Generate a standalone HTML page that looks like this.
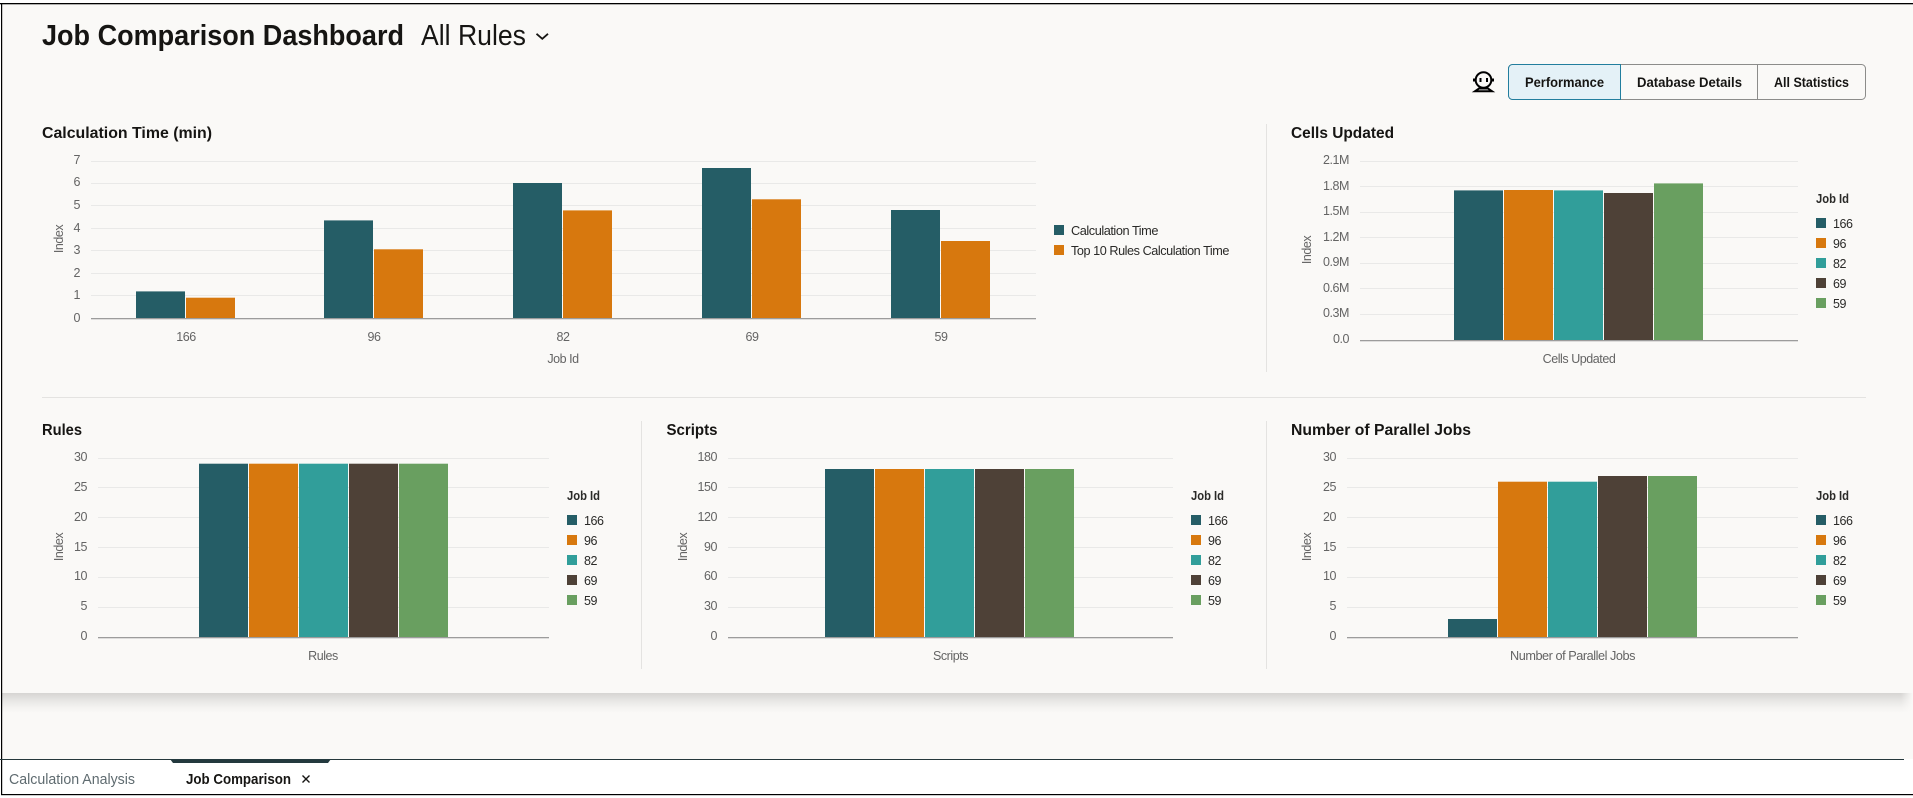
<!DOCTYPE html>
<html lang="en">
<head>
<meta charset="utf-8">
<title>Job Comparison Dashboard</title>
<style>
html,body{margin:0;padding:0;background:#fff;width:1913px;height:798px;overflow:hidden}
svg{display:block;position:absolute;left:0;top:0}
text{font-family:"Liberation Sans",Arial,sans-serif}
.h1{font-size:29px;font-weight:700;fill:#161513}
.sub{font-size:29px;fill:#161513}
.h2{font-size:16px;font-weight:700;fill:#161513}
.ax{font-size:12.5px;fill:#646464;letter-spacing:-.45px}
.lg{font-size:12.5px;fill:#2a2a28;letter-spacing:-.45px}
.lt{font-size:12.5px;font-weight:700;fill:#2a2a28}
.btn{font-size:14px;font-weight:700;fill:#161513}
.grid rect{fill:#e9e9e8}
.a{fill:#255d66}.b{fill:#d7780e}.c{fill:#319e9a}.d{fill:#4e4137}.e{fill:#699f60}
.base{fill:#9c9c9c}
.div{fill:#e4e3e1}
</style>
</head>
<body>
<svg width="1913" height="798" viewBox="0 0 1913 798" xmlns="http://www.w3.org/2000/svg">
<defs>
<linearGradient id="sh" x1="0" y1="0" x2="0" y2="1">
<stop offset="0" stop-color="#d6d5d3"/>
<stop offset=".35" stop-color="#e6e5e3"/>
<stop offset=".7" stop-color="#f3f2f0"/>
<stop offset="1" stop-color="#faf9f7"/>
</linearGradient>
<linearGradient id="fade" x1="0" y1="0" x2="1" y2="0">
<stop offset="0" stop-color="#faf9f7" stop-opacity="0"/>
<stop offset="1" stop-color="#faf9f7" stop-opacity="1"/>
</linearGradient>
</defs>

<!-- frame / page -->
<rect x="0" y="0" width="1913" height="798" fill="#fff"/>
<rect x="2" y="4" width="1911" height="755" fill="#faf9f7"/>
<rect x="2" y="693" width="1911" height="20" fill="url(#sh)"/>
<rect x="1901" y="693" width="12" height="20" fill="url(#fade)"/>
<rect x="0" y="3" width="1913" height="1.3" fill="#000"/>
<rect x="1" y="3" width="1.2" height="792" fill="#000"/>
<rect x="1" y="794" width="1912" height="1.2" fill="#000"/>
<rect x="0" y="759" width="1904" height="1" fill="#25383c"/>
<polygon points="170,759 331,759 328,763 173,763" fill="#23393e"/>

<!-- bottom tabs -->
<text x="9" y="784" font-size="15" fill="#5f6b70" textLength="126" lengthAdjust="spacingAndGlyphs">Calculation Analysis</text>
<text x="186" y="784" font-size="15" font-weight="700" fill="#161513" textLength="105" lengthAdjust="spacingAndGlyphs">Job Comparison</text>
<path d="M302.5 775.5L309.5 782.5M309.5 775.5L302.5 782.5" stroke="#161513" stroke-width="1.4" fill="none"/>

<!-- heading -->
<text class="h1" x="42" y="45" textLength="362" lengthAdjust="spacingAndGlyphs">Job Comparison Dashboard</text>
<text class="sub" x="421" y="45" textLength="105" lengthAdjust="spacingAndGlyphs">All Rules</text>
<path d="M536.5 33.8L542.3 38.8L548 33.8" stroke="#161513" stroke-width="1.8" fill="none"/>

<!-- avatar icon -->
<g fill="none" stroke="#000" stroke-width="2">
<circle cx="1483.5" cy="80" r="7.8"/>
<path d="M1479 88.5h9l4 2.7h-17z"/>
</g>
<rect x="1473" y="78.5" width="2.5" height="3" fill="#000"/>
<rect x="1491.5" y="78.5" width="2.5" height="3" fill="#000"/>
<rect x="1479.5" y="78" width="2" height="4" fill="#000"/>
<rect x="1486" y="78" width="2" height="4" fill="#000"/>

<!-- segmented buttons -->
<rect x="1508.5" y="64.5" width="357" height="35" rx="4" fill="#faf9f7" stroke="#8c8c8a"/>
<path d="M1620.5 64.5h-108a4 4 0 0 0-4 4v27a4 4 0 0 0 4 4h108z" fill="#e4f1f7" stroke="#227e9e"/>
<rect x="1757" y="65" width="1" height="34" fill="#8c8c8a"/>
<text class="btn" x="1525" y="87" textLength="79" lengthAdjust="spacingAndGlyphs">Performance</text>
<text class="btn" x="1637" y="87" textLength="105" lengthAdjust="spacingAndGlyphs">Database Details</text>
<text class="btn" x="1774" y="87" textLength="75" lengthAdjust="spacingAndGlyphs">All Statistics</text>

<!-- dividers -->
<rect class="div" x="1266" y="124" width="1" height="248"/>
<rect class="div" x="42" y="397" width="1824" height="1"/>
<rect class="div" x="641" y="421" width="1" height="248"/>
<rect class="div" x="1266" y="421" width="1" height="248"/>

<!-- Chart 1 -->
<text class="h2" x="42" y="138" textLength="170" lengthAdjust="spacingAndGlyphs">Calculation Time (min)</text>
<g class="grid">
<rect x="91" y="161" width="945" height="1"/><rect x="91" y="183" width="945" height="1"/><rect x="91" y="205" width="945" height="1"/><rect x="91" y="228" width="945" height="1"/><rect x="91" y="250" width="945" height="1"/><rect x="91" y="273" width="945" height="1"/><rect x="91" y="295" width="945" height="1"/>
</g>
<rect class="a" x="136" y="291.4" width="49" height="26.6"/><rect class="b" x="186" y="297.7" width="49" height="20.3"/>
<rect class="a" x="324" y="220.4" width="49" height="97.6"/><rect class="b" x="374" y="249.3" width="49" height="68.7"/>
<rect class="a" x="513" y="183" width="49" height="135"/><rect class="b" x="563" y="210.4" width="49" height="107.6"/>
<rect class="a" x="702" y="168" width="49" height="150"/><rect class="b" x="752" y="199.3" width="49" height="118.7"/>
<rect class="a" x="891" y="210" width="49" height="108"/><rect class="b" x="941" y="241" width="49" height="77"/>
<rect class="base" x="91" y="318" width="945" height="1.3"/>
<g class="ax" text-anchor="end">
<text x="80" y="164">7</text><text x="80" y="186">6</text><text x="80" y="209">5</text><text x="80" y="232">4</text><text x="80" y="254">3</text><text x="80" y="277">2</text><text x="80" y="299">1</text><text x="80" y="322">0</text>
</g>
<text class="ax" transform="rotate(-90 63 239)" x="63" y="239" text-anchor="middle">Index</text>
<g class="ax" text-anchor="middle">
<text x="186" y="341">166</text><text x="374" y="341">96</text><text x="563" y="341">82</text><text x="752" y="341">69</text><text x="941" y="341">59</text>
<text x="563" y="363">Job Id</text>
</g>
<rect class="a" x="1054" y="225" width="10" height="10"/><rect class="b" x="1054" y="245" width="10" height="10"/>
<text class="lg" x="1071" y="235" textLength="87" lengthAdjust="spacingAndGlyphs">Calculation Time</text>
<text class="lg" x="1071" y="255" textLength="158" lengthAdjust="spacingAndGlyphs">Top 10 Rules Calculation Time</text>

<!-- Chart 2 -->
<text class="h2" x="1291" y="138" textLength="103" lengthAdjust="spacingAndGlyphs">Cells Updated</text>
<g class="grid">
<rect x="1360" y="161" width="438" height="1"/><rect x="1360" y="186" width="438" height="1"/><rect x="1360" y="212" width="438" height="1"/><rect x="1360" y="237" width="438" height="1"/><rect x="1360" y="263" width="438" height="1"/><rect x="1360" y="288" width="438" height="1"/><rect x="1360" y="314" width="438" height="1"/>
</g>
<rect class="a" x="1454" y="190.4" width="49" height="149.6"/><rect class="b" x="1504" y="190" width="49" height="150"/><rect class="c" x="1554" y="190.4" width="49" height="149.6"/><rect class="d" x="1604" y="193" width="49" height="147"/><rect class="e" x="1654" y="183.4" width="49" height="156.6"/>
<rect class="base" x="1360" y="340" width="438" height="1.3"/>
<g class="ax" text-anchor="end">
<text x="1349" y="164">2.1M</text><text x="1349" y="190">1.8M</text><text x="1349" y="215">1.5M</text><text x="1349" y="241">1.2M</text><text x="1349" y="266">0.9M</text><text x="1349" y="292">0.6M</text><text x="1349" y="317">0.3M</text><text x="1349" y="343">0.0</text>
</g>
<text class="ax" transform="rotate(-90 1311 250)" x="1311" y="250" text-anchor="middle">Index</text>
<text class="ax" x="1579" y="363" text-anchor="middle">Cells Updated</text>
<text class="lt" x="1816" y="203" textLength="33" lengthAdjust="spacingAndGlyphs">Job Id</text>
<rect class="a" x="1816" y="218" width="10" height="10"/><rect class="b" x="1816" y="238" width="10" height="10"/><rect class="c" x="1816" y="258" width="10" height="10"/><rect class="d" x="1816" y="278" width="10" height="10"/><rect class="e" x="1816" y="298" width="10" height="10"/>
<text class="lg" x="1833" y="228">166</text><text class="lg" x="1833" y="248">96</text><text class="lg" x="1833" y="268">82</text><text class="lg" x="1833" y="288">69</text><text class="lg" x="1833" y="308">59</text>

<!-- Rules -->
<text class="h2" x="42" y="435" textLength="40" lengthAdjust="spacingAndGlyphs">Rules</text>
<g class="grid">
<rect x="98" y="458" width="451" height="1"/><rect x="98" y="487" width="451" height="1"/><rect x="98" y="517" width="451" height="1"/><rect x="98" y="547" width="451" height="1"/><rect x="98" y="577" width="451" height="1"/><rect x="98" y="607" width="451" height="1"/>
</g>
<rect class="a" x="199" y="463.7" width="49" height="173.3"/><rect class="b" x="249" y="463.7" width="49" height="173.3"/><rect class="c" x="299" y="463.7" width="49" height="173.3"/><rect class="d" x="349" y="463.7" width="49" height="173.3"/><rect class="e" x="399" y="463.7" width="49" height="173.3"/>
<rect class="base" x="98" y="637" width="451" height="1.3"/>
<g class="ax" text-anchor="end">
<text x="87" y="461">30</text><text x="87" y="491">25</text><text x="87" y="521">20</text><text x="87" y="551">15</text><text x="87" y="580">10</text><text x="87" y="610">5</text><text x="87" y="640">0</text>
</g>
<text class="ax" transform="rotate(-90 63 547)" x="63" y="547" text-anchor="middle">Index</text>
<text class="ax" x="323" y="660" text-anchor="middle">Rules</text>
<text class="lt" x="567" y="500" textLength="33" lengthAdjust="spacingAndGlyphs">Job Id</text>
<rect class="a" x="567" y="515" width="10" height="10"/><rect class="b" x="567" y="535" width="10" height="10"/><rect class="c" x="567" y="555" width="10" height="10"/><rect class="d" x="567" y="575" width="10" height="10"/><rect class="e" x="567" y="595" width="10" height="10"/>
<text class="lg" x="584" y="525">166</text><text class="lg" x="584" y="545">96</text><text class="lg" x="584" y="565">82</text><text class="lg" x="584" y="585">69</text><text class="lg" x="584" y="605">59</text>

<!-- Scripts -->
<text class="h2" x="666.5" y="435" textLength="51" lengthAdjust="spacingAndGlyphs">Scripts</text>
<g class="grid">
<rect x="728" y="458" width="445" height="1"/><rect x="728" y="487" width="445" height="1"/><rect x="728" y="517" width="445" height="1"/><rect x="728" y="547" width="445" height="1"/><rect x="728" y="577" width="445" height="1"/><rect x="728" y="607" width="445" height="1"/>
</g>
<rect class="a" x="825" y="469" width="49" height="168"/><rect class="b" x="875" y="469" width="49" height="168"/><rect class="c" x="925" y="469" width="49" height="168"/><rect class="d" x="975" y="469" width="49" height="168"/><rect class="e" x="1025" y="469" width="49" height="168"/>
<rect class="base" x="728" y="637" width="445" height="1.3"/>
<g class="ax" text-anchor="end">
<text x="717" y="461">180</text><text x="717" y="491">150</text><text x="717" y="521">120</text><text x="717" y="551">90</text><text x="717" y="580">60</text><text x="717" y="610">30</text><text x="717" y="640">0</text>
</g>
<text class="ax" transform="rotate(-90 687 547)" x="687" y="547" text-anchor="middle">Index</text>
<text class="ax" x="950.5" y="660" text-anchor="middle">Scripts</text>
<text class="lt" x="1191" y="500" textLength="33" lengthAdjust="spacingAndGlyphs">Job Id</text>
<rect class="a" x="1191" y="515" width="10" height="10"/><rect class="b" x="1191" y="535" width="10" height="10"/><rect class="c" x="1191" y="555" width="10" height="10"/><rect class="d" x="1191" y="575" width="10" height="10"/><rect class="e" x="1191" y="595" width="10" height="10"/>
<text class="lg" x="1208" y="525">166</text><text class="lg" x="1208" y="545">96</text><text class="lg" x="1208" y="565">82</text><text class="lg" x="1208" y="585">69</text><text class="lg" x="1208" y="605">59</text>

<!-- Parallel -->
<text class="h2" x="1291" y="435" textLength="180" lengthAdjust="spacingAndGlyphs">Number of Parallel Jobs</text>
<g class="grid">
<rect x="1347" y="458" width="451" height="1"/><rect x="1347" y="487" width="451" height="1"/><rect x="1347" y="517" width="451" height="1"/><rect x="1347" y="547" width="451" height="1"/><rect x="1347" y="577" width="451" height="1"/><rect x="1347" y="607" width="451" height="1"/>
</g>
<rect class="a" x="1448" y="619" width="49" height="18"/><rect class="b" x="1498" y="481.7" width="49" height="155.3"/><rect class="c" x="1548" y="481.7" width="49" height="155.3"/><rect class="d" x="1598" y="476" width="49" height="161"/><rect class="e" x="1648" y="476" width="49" height="161"/>
<rect class="base" x="1347" y="637" width="451" height="1.3"/>
<g class="ax" text-anchor="end">
<text x="1336" y="461">30</text><text x="1336" y="491">25</text><text x="1336" y="521">20</text><text x="1336" y="551">15</text><text x="1336" y="580">10</text><text x="1336" y="610">5</text><text x="1336" y="640">0</text>
</g>
<text class="ax" transform="rotate(-90 1311 547)" x="1311" y="547" text-anchor="middle">Index</text>
<text class="ax" x="1572.5" y="660" text-anchor="middle" textLength="125" lengthAdjust="spacingAndGlyphs">Number of Parallel Jobs</text>
<text class="lt" x="1816" y="500" textLength="33" lengthAdjust="spacingAndGlyphs">Job Id</text>
<rect class="a" x="1816" y="515" width="10" height="10"/><rect class="b" x="1816" y="535" width="10" height="10"/><rect class="c" x="1816" y="555" width="10" height="10"/><rect class="d" x="1816" y="575" width="10" height="10"/><rect class="e" x="1816" y="595" width="10" height="10"/>
<text class="lg" x="1833" y="525">166</text><text class="lg" x="1833" y="545">96</text><text class="lg" x="1833" y="565">82</text><text class="lg" x="1833" y="585">69</text><text class="lg" x="1833" y="605">59</text>
</svg>
</body>
</html>
